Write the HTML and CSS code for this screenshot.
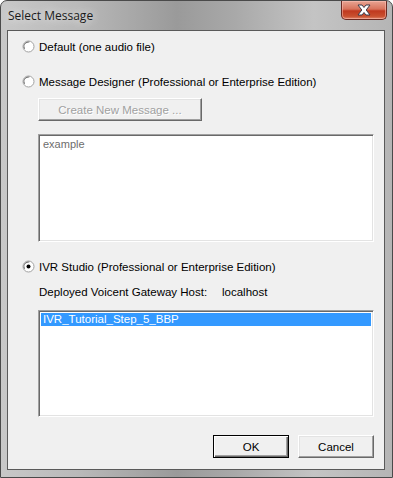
FILE: index.html
```html
<!DOCTYPE html>
<html>
<head>
<meta charset="utf-8">
<link rel="stylesheet" href="styles.css">
</head>
<body>
<div class="window">
  <div class="titlebar">
    <span class="title">Select Message</span>
    <div class="close">
      <svg width="18" height="12" viewBox="0 0 18 12">
        <path d="M3 1 H7 L9 3.5 L11 1 H15 L11.2 6 L15 11 H11 L9 8.5 L7 11 H3 L6.8 6 Z" fill="#fff" stroke="#3b3b4a" stroke-width="1"/>
      </svg>
    </div>
  </div>
  <div class="client">
    <label class="radio-row first">
      <svg class="radio" width="13" height="13" viewBox="0 0 13 13"><circle cx="6.5" cy="6.5" r="5.5" fill="#fff" stroke="#a0a0a0"/><circle cx="6.5" cy="6.5" r="4.5" fill="none" stroke="#696969" stroke-width="1" stroke-dasharray="10 20" transform="rotate(150 6.5 6.5)"/></svg>
      <span>Default (one audio file)</span>
    </label>
    <label class="radio-row second">
      <svg class="radio" width="13" height="13" viewBox="0 0 13 13"><circle cx="6.5" cy="6.5" r="5.5" fill="#fff" stroke="#a0a0a0"/><circle cx="6.5" cy="6.5" r="4.5" fill="none" stroke="#696969" stroke-width="1" stroke-dasharray="10 20" transform="rotate(150 6.5 6.5)"/></svg>
      <span>Message Designer (Professional or Enterprise Edition)</span>
    </label>
    <div class="btn create">Create New Message ...</div>
    <div class="sunken textbox"><span class="placeholder">example</span></div>
    <label class="radio-row third">
      <svg class="radio" width="13" height="13" viewBox="0 0 13 13"><circle cx="6.5" cy="6.5" r="5.5" fill="#fff" stroke="#a0a0a0"/><circle cx="6.5" cy="6.5" r="4.5" fill="none" stroke="#696969" stroke-width="1" stroke-dasharray="10 20" transform="rotate(150 6.5 6.5)"/><circle cx="6.5" cy="6.5" r="2" fill="#000"/></svg>
      <span>IVR Studio (Professional or Enterprise Edition)</span>
    </label>
    <div class="host-row">
      <span class="host-label">Deployed Voicent Gateway Host:</span>
      <span>localhost</span>
    </div>
    <div class="sunken listbox">
      <div class="item selected">IVR_Tutorial_Step_5_BBP</div>
    </div>
    <div class="actions">
      <div class="btn default">OK</div>
      <div class="btn">Cancel</div>
    </div>
  </div>
</div>
</body>
</html>
```
FILE: styles.css
```css
html, body {
  margin: 0;
  padding: 0;
  background: #fff;
}
.window {
  width: 393px;
  height: 478px;
  box-sizing: border-box;
  border: 1px solid #4a4a4a;
  border-radius: 7px 7px 0 0;
  background: linear-gradient(90deg, #c8c8c8 0%, #b9b9b9 20%, #9a9a9a 45%, #a9a9a9 60%, #c4c4c4 80%, #b5b5b5 100%);
  display: flex;
  flex-direction: column;
  font-family: "Liberation Sans Narrow", "Liberation Sans", Arial, sans-serif;
  font-size: 11.5px;
  color: #000;
  overflow: hidden;
}
.titlebar {
  height: 29px;
  display: flex;
  align-items: flex-start;
  justify-content: space-between;
  padding: 0 5px 0 7px;
  flex: none;
}
.title {
  font-family: "Open Sans", "DejaVu Sans", sans-serif;
  font-size: 12px;
  color: #1a1a1a;
  margin-top: 6px;
  text-shadow: 0 0 8px rgba(255,255,255,0.9);
}
.close {
  width: 46px;
  height: 19px;
  box-sizing: border-box;
  border: 1px solid #6b2a22;
  border-top: none;
  border-radius: 0 0 5px 5px;
  background: linear-gradient(#e8a493 0%, #d8735c 45%, #c0391f 55%, #c9502f 85%, #e0866b 100%);
  display: flex;
  align-items: center;
  justify-content: center;
  box-shadow: inset 0 0 0 1px rgba(255,200,190,0.5);
}
.client {
  flex: 1;
  margin: 0 7px 7px 6px;
  border: 1px solid #5a5a5a;
  background: #f0f0f0;
  display: flex;
  flex-direction: column;
  padding: 0 10px 0 14px;
}
.radio-row {
  display: flex;
  align-items: center;
  height: 13px;
  gap: 4px;
  white-space: nowrap;
}
.radio { flex: none; }
.radio-row.first { margin-top: 9px; }
.radio-row.second { margin-top: 22px; }
.radio-row.third { margin-top: 18px; }
.btn {
  height: 23px;
  box-sizing: border-box;
  display: flex;
  align-items: center;
  justify-content: center;
  background: #f0f0f0;
  border: 1px solid;
  border-color: #fff #696969 #696969 #fff;
  box-shadow: inset -1px -1px 0 #a0a0a0, inset 1px 1px 0 #e3e3e3;
}
.btn.create {
  margin: 10px 0 0 16px;
  width: 164px;
  color: #a0a0a0;
  text-shadow: 1px 1px 0 #fff;
}
.btn.default {
  border-color: #000;
  box-shadow: inset 1px 1px 0 #fff, inset -1px -1px 0 #696969, inset -2px -2px 0 #a0a0a0;
}
.sunken {
  margin-left: 16px;
  width: 336px;
  box-sizing: border-box;
  background: #fff;
  border: 1px solid;
  border-color: #a0a0a0 #fff #fff #a0a0a0;
  box-shadow: inset 1px 1px 0 #696969, inset -1px -1px 0 #e3e3e3;
}
.textbox {
  margin-top: 13px;
  height: 108px;
  padding: 3px 4px;
}
.placeholder {
  color: #6d6d6d;
  font-family: "Liberation Sans", Arial, sans-serif;
  font-size: 11px;
}
.host-row {
  margin-top: 12px;
  height: 13px;
  display: flex;
  align-items: center;
  padding-left: 17px;
  white-space: nowrap;
}
.host-label { width: 183px; }
.listbox {
  margin-top: 12px;
  height: 107px;
  padding: 2px;
}
.item {
  height: 13px;
  line-height: 13px;
  padding-left: 2px;
}
.item.selected {
  background: #3399ff;
  color: #fff;
}
.actions {
  margin-top: 18px;
  display: flex;
  justify-content: flex-end;
  gap: 9px;
}
.actions .btn { width: 76px; }
```
